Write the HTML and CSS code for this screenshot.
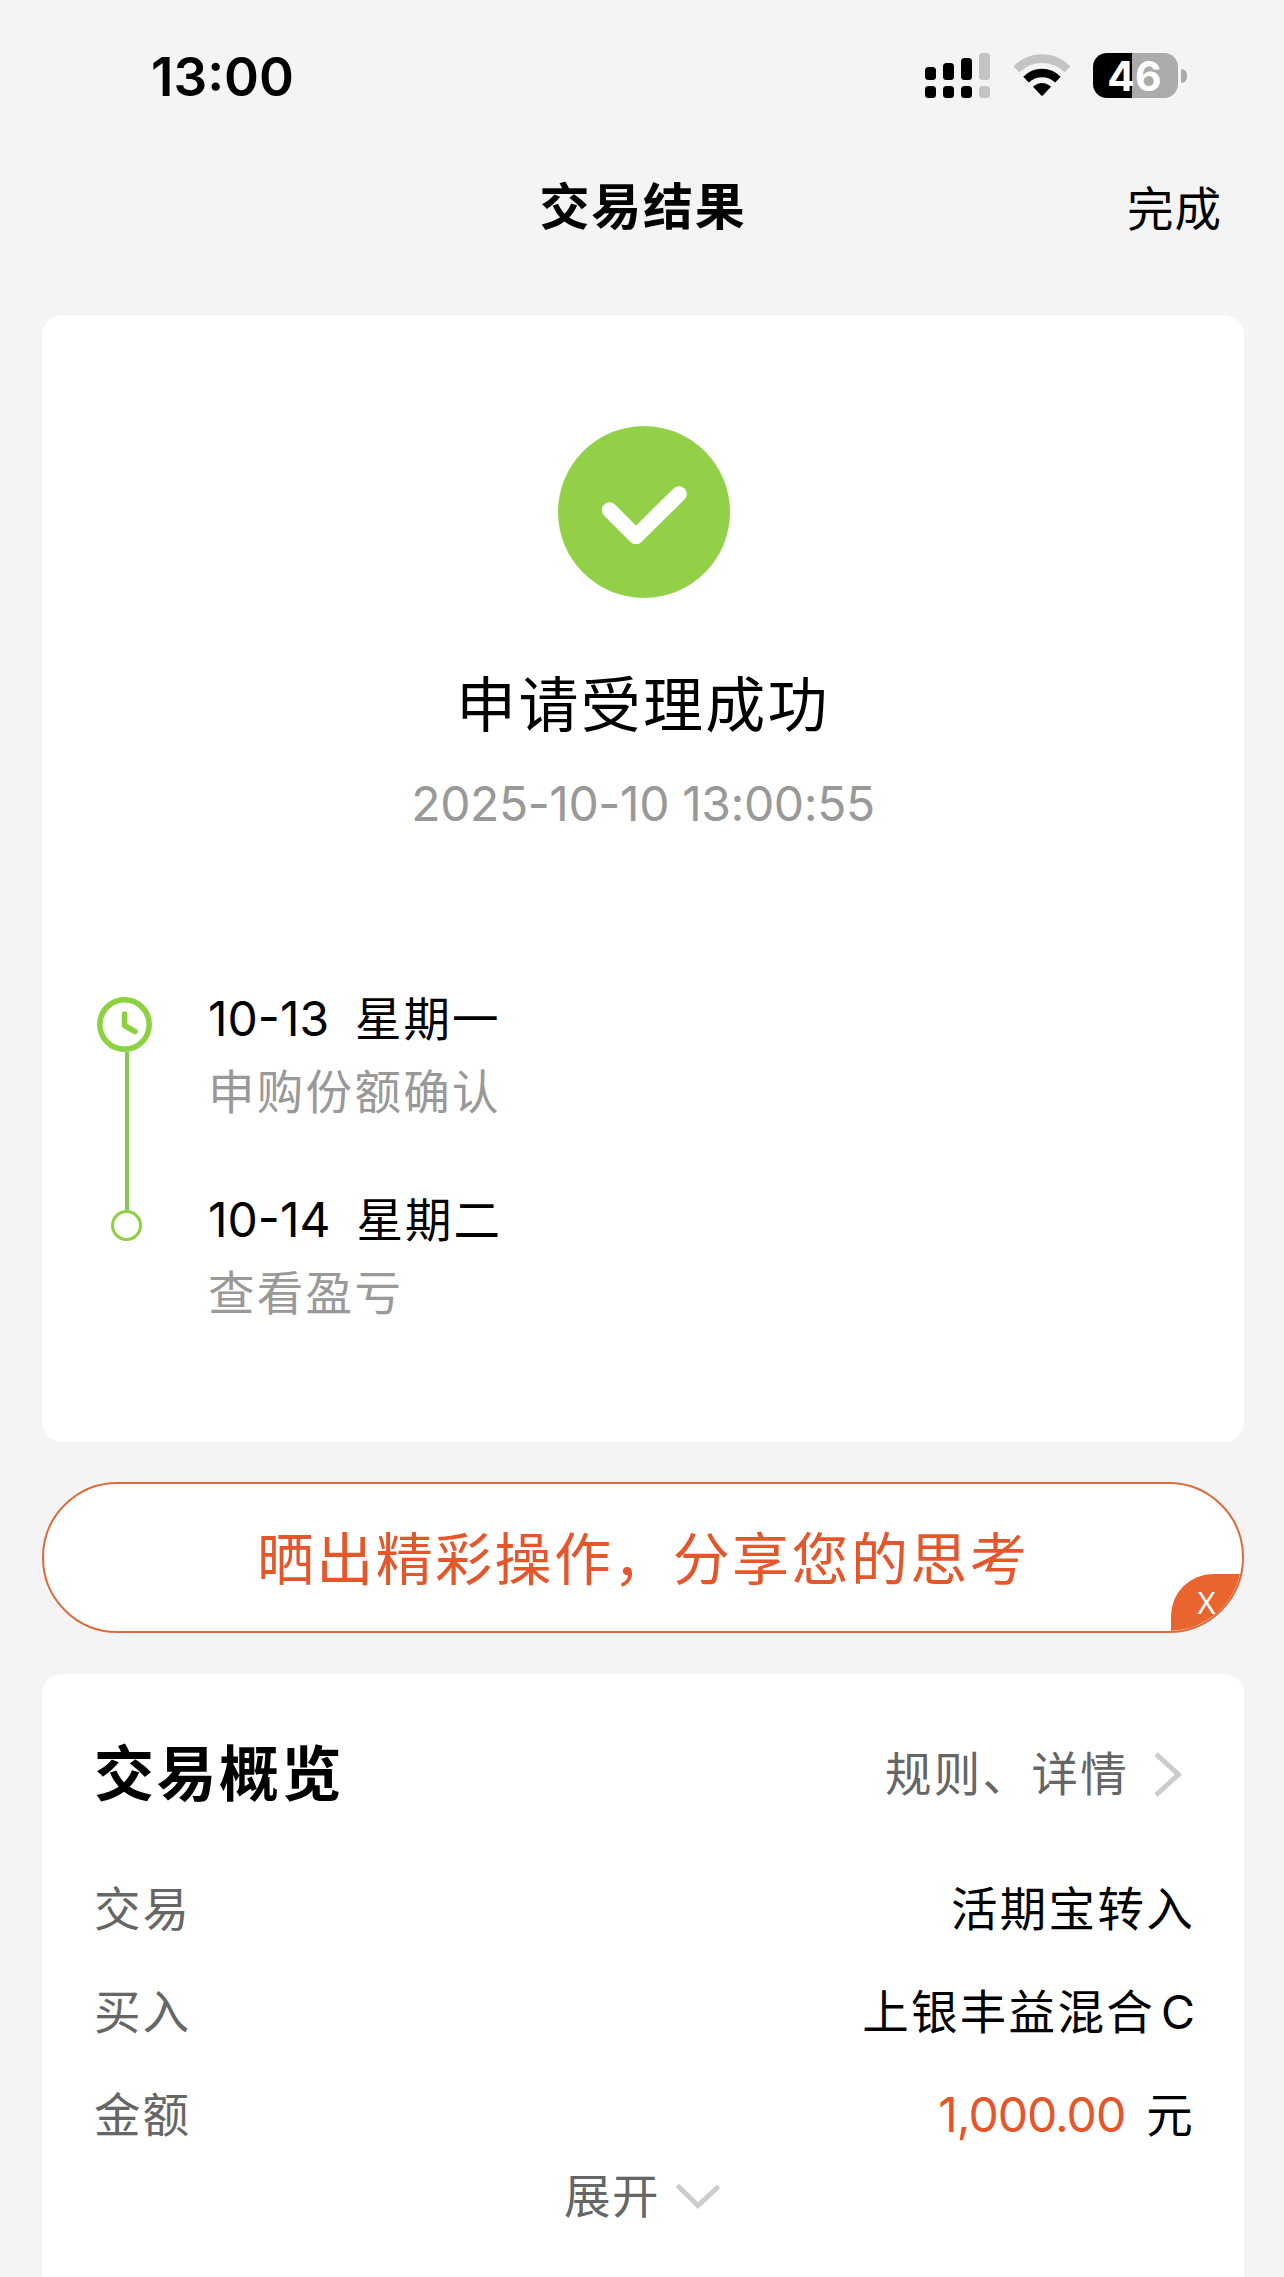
FILE: index.html
```
<!DOCTYPE html>
<html lang="zh-CN">

<head>
  <meta charset="UTF-8">
  <meta name="viewport" content="width=device-width, initial-scale=1.0">
  <title>交易结果</title>
  <link rel="stylesheet" href="styles.css">
</head>

<body>
  <div class="status-bar">
    <div class="time">13:00</div>
    <div class="status-icons">
      <svg class="signal" width="65" height="45" viewBox="0 0 65 45">
        <rect x="0" y="14" width="11" height="13" rx="3.5" />
        <rect x="18" y="10" width="11" height="17" rx="3.5" />
        <rect x="36" y="5" width="11" height="22" rx="3.5" />
        <rect class="off" x="54" y="0" width="11" height="27" rx="3.5" />
        <rect x="0" y="33" width="11" height="12" rx="3.5" />
        <rect x="18" y="33" width="11" height="12" rx="3.5" />
        <rect x="36" y="33" width="11" height="12" rx="3.5" />
        <rect class="off" x="54" y="33" width="11" height="12" rx="3.5" />
      </svg>
      <svg class="wifi" width="58" height="45" viewBox="0 0 58 45">
        <path class="off" d="M0.5 13.5Q12 1.3 29 1.3Q46 1.3 57.5 13.5L51.7 19.3Q42 10 29 10Q16 10 6.3 19.3Z" />
        <path d="M10.3 23.8Q18 15.8 29 15.8Q40 15.8 47.7 23.8L42.2 29.5Q36.5 24.2 29 24.2Q21.5 24.2 15.8 29.5Z" />
        <path d="M20 33.8Q24 30 29 30Q34 30 38 33.8L30 42.2Q29 43.2 28 42.2Z" />
      </svg>
      <div class="battery">
        <div class="battery-body">46</div>
        <div class="battery-cap"></div>
      </div>
    </div>
  </div>

  <div class="nav">
    <div class="nav-title">交易结果</div>
    <div class="nav-done">完成</div>
  </div>

  <div class="card result">
    <svg class="success" width="172" height="172" viewBox="0 0 172 172">
      <circle cx="86" cy="86" r="86" />
      <path d="M51.5 84L78 110.500L121 68" />
    </svg>
    <div class="result-title">申请受理成功</div>
    <div class="result-time">2025-10-10 13:00:55</div>

    <div class="timeline">
      <svg class="track" width="56" height="245" viewBox="0 0 56 245">
        <path class="line" d="M30 55V213" />
        <circle class="clock" cx="27.500" cy="27.500" r="24.700" />
        <path class="hands" d="M27.500 17V28.500L38 34.500" />
        <circle class="dot" cx="29.500" cy="228.500" r="14" />
      </svg>
      <div class="steps">
        <div class="step">
          <div class="step-date"><span>10-13</span><span>星期一</span></div>
          <div class="step-desc">申购份额确认</div>
        </div>
        <div class="step">
          <div class="step-date"><span>10-14</span><span>星期二</span></div>
          <div class="step-desc">查看盈亏</div>
        </div>
      </div>
    </div>
  </div>

  <div class="share">
    晒出精彩操作，分享您的思考
    <div class="share-close">X</div>
  </div>

  <div class="card overview">
    <div class="overview-head">
      <div class="overview-title">交易概览</div>
      <div class="overview-link">
        规则、详情
        <svg width="30" height="48" viewBox="0 0 30 48">
          <path d="M3 4L25.500 24.500L3 45" />
        </svg>
      </div>
    </div>
    <div class="row">
      <div class="label">交易</div>
      <div class="value">活期宝转入</div>
    </div>
    <div class="row">
      <div class="label">买入</div>
      <div class="value">上银丰益混合<span class="latin">C</span></div>
    </div>
    <div class="row">
      <div class="label">金额</div>
      <div class="value"><span class="amount">1,000.00</span>元</div>
    </div>
    <div class="expand">
      展开
      <svg width="44" height="26" viewBox="0 0 44 26">
        <path d="M3 4L22 22.500L41 5" />
      </svg>
    </div>
  </div>
</body>

</html>
```
FILE: styles.css
```
* {
  box-sizing: border-box;
}

body {
  margin: 0;
  height: 2277px;
  overflow: hidden;
  background: #f4f4f4;
  color: #000;
  font-family: Inter, "Noto Sans CJK SC", sans-serif;
  font-size: 46.500px;
  line-height: 72px;
}

svg {
  display: block;
  flex: none;
}

/* 状态栏 */
.status-bar {
  display: flex;
  justify-content: space-between;
  align-items: center;
  height: 151px;
  padding: 0 97px 0 151px;
}

.time {
  padding-top: 3px;
  font-size: 53px;
  font-weight: 600;
}

.status-icons {
  display: flex;
  align-items: center;
}

.status-icons .off {
  fill: #c4c4c4;
}

.wifi {
  margin-left: 23px;
}

.battery {
  display: flex;
  align-items: center;
  margin-left: 22px;
}

.battery-body {
  width: 85px;
  height: 45px;
  padding-right: 2px;
  border-radius: 14px;
  background: linear-gradient(to right, #000 39px, #ababab 39px);
  color: #fff;
  font-size: 41px;
  font-weight: 700;
  line-height: 46px;
  text-align: center;
}

.battery-cap {
  width: 6px;
  height: 14px;
  margin-left: 3px;
  border-radius: 0 6px 6px 0;
  background: #ababab;
}

/* 标题栏 */
.nav {
  display: grid;
  grid-template-columns: 1fr auto 1fr;
  align-items: center;
  height: 108px;
  margin-bottom: 56px;
  padding: 4px 62px 0 64px;
}

.nav-title {
  grid-column: 2;
  font-size: 50px;
  font-weight: 600;
  letter-spacing: 1.700px;
}

.nav-done {
  justify-self: end;
  padding-top: 3px;
  letter-spacing: 1px;
}

.card {
  margin: 0 40px 0 42px;
  border-radius: 20px;
  background: #fff;
}

/* 受理结果 */
.result {
  display: flex;
  flex-direction: column;
  align-items: center;
  height: 1127px;
  padding-top: 111px;
}

.success {
  margin-left: 2px;
}

.success circle {
  fill: #92d147;
}

.success path {
  fill: none;
  stroke: #fff;
  stroke-width: 15.500px;
  stroke-linecap: round;
  stroke-linejoin: round;
}

.result-title {
  margin-top: 67px;
  font-size: 60px;
  line-height: 80px;
  letter-spacing: 2.300px;
}

.result-time {
  margin-top: 23px;
  color: #999;
  font-size: 48px;
  letter-spacing: -0.400px;
}

/* 确认进度 */
.timeline {
  display: flex;
  align-self: stretch;
  margin-top: 143px;
  padding-left: 55px;
}

.track {
  margin-top: 14px;
}

.track .line {
  stroke: #86c850;
  stroke-width: 4px;
}

.track .clock,
.track .hands,
.track .dot {
  fill: none;
  stroke: #8cd13f;
  stroke-width: 5.500px;
  stroke-linecap: round;
  stroke-linejoin: round;
}

.track .dot {
  stroke-width: 3px;
}

.steps {
  margin-left: 55px;
}

.step {
  height: 201px;
}

.step-date {
  display: flex;
  gap: 26px;
  letter-spacing: 2px;
}

.step-date span:first-child {
  font-size: 48px;
  letter-spacing: 0;
}

.step-desc {
  padding-top: 1px;
  color: #999;
  letter-spacing: 2.300px;
}

/* 分享按钮 */
.share {
  position: relative;
  height: 151px;
  margin: 40px 40px 41px 42px;
  border: 2px solid #dc6b3c;
  border-radius: 76px;
  overflow: hidden;
  background: #fff;
  color: #e5572b;
  font-size: 57px;
  line-height: 151px;
  letter-spacing: 2.400px;
  text-align: center;
}

.share-close {
  position: absolute;
  right: -2px;
  bottom: -2px;
  width: 73px;
  height: 59px;
  border-top-left-radius: 42px;
  background: #ea6430;
  color: #fff;
  font-family: "Noto Sans", sans-serif;
  font-size: 31px;
  line-height: 56px;
  letter-spacing: 0;
  text-indent: -2px;
}

/* 交易概览 */
.overview {
  height: 640px;
  padding: 64px 49px 0 52px;
}

.overview-head,
.row {
  display: flex;
  justify-content: space-between;
  align-items: center;
}

.overview-head {
  margin-bottom: 63px;
}

.overview-title {
  font-size: 60px;
  font-weight: 700;
  letter-spacing: 2.500px;
}

.overview-link {
  display: flex;
  align-items: center;
  gap: 24px;
  padding-right: 12px;
  color: #666;
  letter-spacing: 2.300px;
}

.overview svg {
  fill: none;
  stroke: #ccc;
  stroke-width: 5px;
}

.row {
  height: 72px;
  margin-bottom: 31px;
}

.label {
  color: #666;
  letter-spacing: 2px;
}

.value {
  letter-spacing: 2.300px;
}

.latin {
  margin-left: 6px;
  letter-spacing: 0;
}

.amount {
  margin-right: 21px;
  color: #e5572b;
  font-size: 48px;
  letter-spacing: -1px;
}

.expand {
  display: flex;
  justify-content: center;
  align-items: center;
  gap: 16px;
  margin-top: -22px;
  padding-right: 5px;
  color: #666;
  letter-spacing: 1.500px;
}

.expand svg {
  stroke-linecap: round;
}
```
